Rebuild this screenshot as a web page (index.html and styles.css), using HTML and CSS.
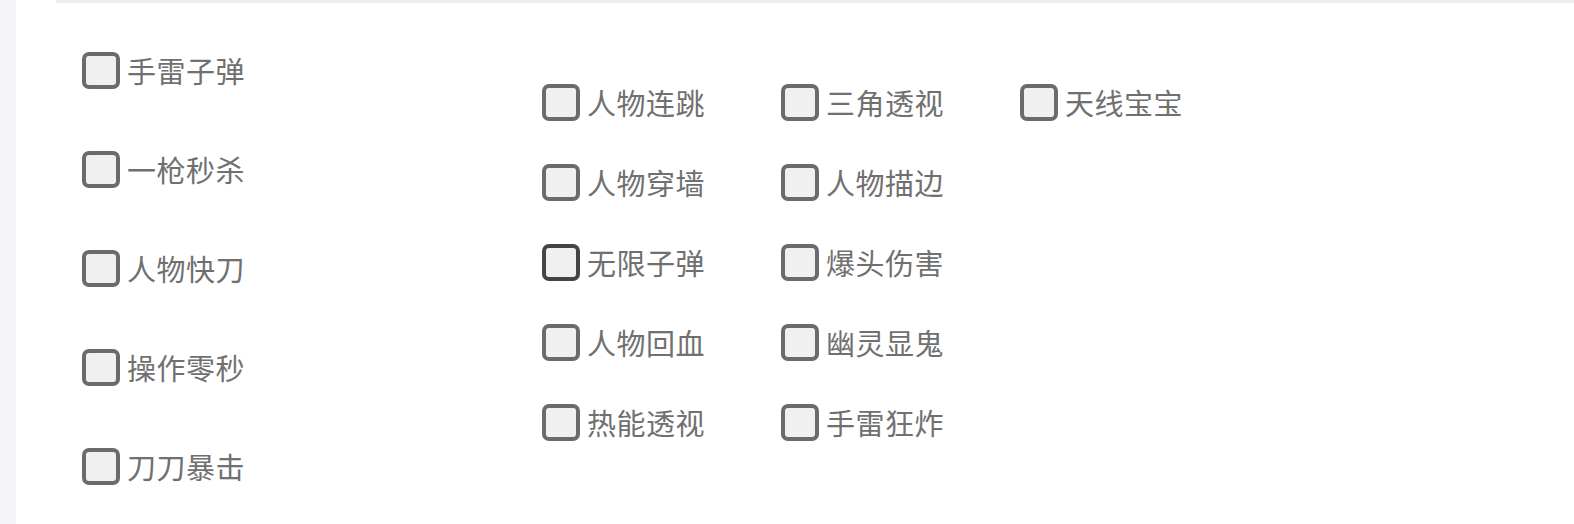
FILE: index.html
```html
<!DOCTYPE html>
<html>
<head>
    <meta charset="UTF-8">
    <title>功能设置</title>
    <link rel="stylesheet" href="styles.css">
</head>
<body>
    <div class="page">
        <div class="divider"></div>

        <div class="options">
            <!-- 左侧单列 -->
            <div class="col-main">
                <label class="opt"><input type="checkbox"><span>手雷子弹</span></label>
                <label class="opt"><input type="checkbox"><span>一枪秒杀</span></label>
                <label class="opt"><input type="checkbox"><span>人物快刀</span></label>
                <label class="opt"><input type="checkbox"><span>操作零秒</span></label>
                <label class="opt"><input type="checkbox"><span>刀刀暴击</span></label>
            </div>

            <!-- 右侧网格 -->
            <div class="opt-grid">
                <label class="opt"><input type="checkbox"><span>人物连跳</span></label>
                <label class="opt"><input type="checkbox"><span>三角透视</span></label>
                <label class="opt"><input type="checkbox"><span>天线宝宝</span></label>

                <label class="opt"><input type="checkbox"><span>人物穿墙</span></label>
                <label class="opt"><input type="checkbox"><span>人物描边</span></label>
                <div></div>

                <label class="opt"><input type="checkbox" class="focus"><span>无限子弹</span></label>
                <label class="opt"><input type="checkbox"><span>爆头伤害</span></label>
                <div></div>

                <label class="opt"><input type="checkbox"><span>人物回血</span></label>
                <label class="opt"><input type="checkbox"><span>幽灵显鬼</span></label>
                <div></div>

                <label class="opt"><input type="checkbox"><span>热能透视</span></label>
                <label class="opt"><input type="checkbox"><span>手雷狂炸</span></label>
                <div></div>
            </div>
        </div>
    </div>
</body>
</html>
```

FILE: styles.css
```css
body {
    margin: 0;
    background-color: #f4f4f9;
    font-family: "Noto Sans CJK SC", "Noto Sans", sans-serif;
}

.page {
    margin-left: 16px;
    min-height: 524px;
    background-color: #fff;
}

.divider {
    margin-left: 40px;
    height: 3px;
    background-color: #ececec;
}

.options {
    display: flex;
    align-items: flex-start;
    padding: 49px 0 0 66px;
}

.col-main {
    display: flex;
    flex-direction: column;
    gap: 63px;
    width: 460px;
}

.opt-grid {
    display: grid;
    grid-template-columns: repeat(3, 239px);
    row-gap: 44px;
    margin-top: 32px;
}

.opt {
    display: flex;
    align-items: center;
    gap: 7px;
    height: 36px;
    font-size: 29px;
    line-height: 36px;
    letter-spacing: 0.5px;
    color: #707070;
    cursor: pointer;
}

.opt input {
    appearance: none;
    -webkit-appearance: none;
    margin: 0;
    width: 38px;
    height: 37px;
    border: 4px solid #6b6b6b;
    border-radius: 7px;
    background-color: #f0f0f0;
    flex-shrink: 0;
}

.opt input.focus {
    border-color: #444;
}

.opt input:checked {
    background-color: #6b6b6b;
}
```
